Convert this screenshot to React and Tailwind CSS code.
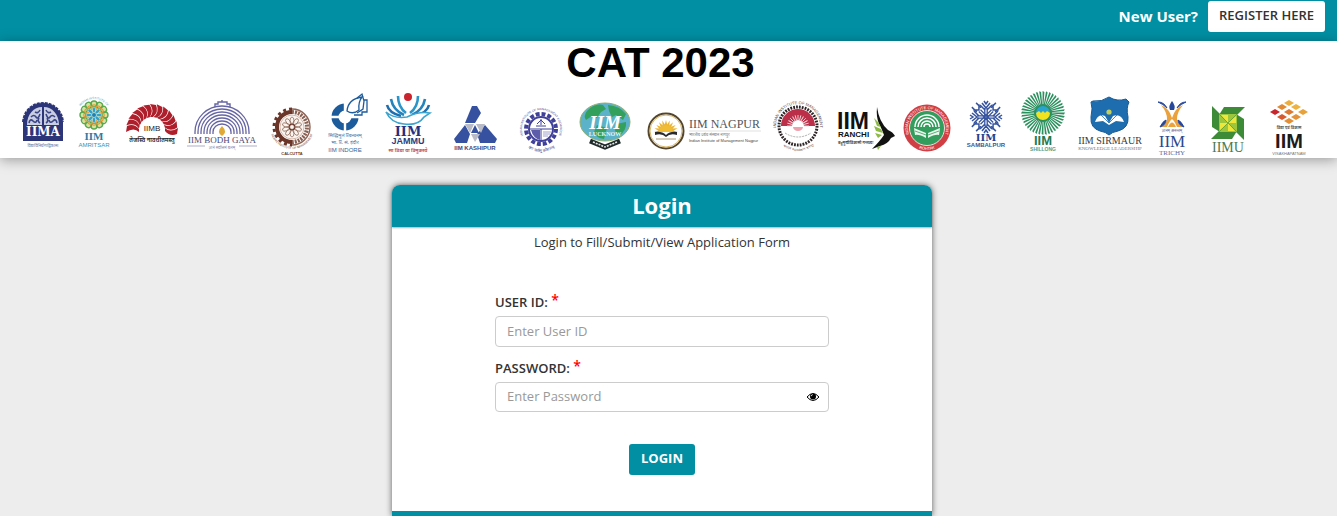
import { useState } from "react"

const SANS = "'Liberation Sans', sans-serif"
const SERIF = "'Liberation Serif', serif"
const SLAB = "'DejaVu Serif', serif"
const HINDI = "'Noto Sans', 'Noto Sans Devanagari', sans-serif"

// ================= HELPERS =================
function Logo({ width, name, children }) {
  return (
    <svg
      width={width}
      height={74}
      viewBox={`0 0 ${width} 74`}
      role="img"
      aria-label={name}
      className="shrink-0"
    >
      {children}
    </svg>
  )
}

function T({ x, y, size, font = SANS, weight = 400, fill, anchor = "middle", children }) {
  return (
    <text
      x={x}
      y={y}
      fontSize={size}
      fontFamily={font}
      fontWeight={weight}
      fill={fill}
      textAnchor={anchor}
    >
      {children}
    </text>
  )
}

// repeats one drawing around a centre
function Spin({ cx, cy, count, start = 0, step, children }) {
  const turn = step || 360 / count
  return Array.from({ length: count }, (_, i) => (
    <g key={i} transform={`translate(${cx} ${cy}) rotate(${start + i * turn})`}>
      {children}
    </g>
  ))
}

// text that runs round a seal, over the top or under the bottom
function RingText({ id, cx, cy, r, size, fill, bottom, children }) {
  const dx = r * 0.77
  const dy = bottom ? -r * 0.64 : r * 0.64
  return (
    <>
      <path
        id={id}
        fill="none"
        d={`M${cx - dx} ${cy + dy} A${r} ${r} 0 1 ${bottom ? 0 : 1} ${cx + dx} ${cy + dy}`}
      />
      <text fontSize={size} fontFamily={SANS} fill={fill} textAnchor="middle">
        <textPath href={`#${id}`} startOffset="50%">
          {children}
        </textPath>
      </text>
    </>
  )
}

// ================= LOGOS =================
function Ahmedabad() {
  return (
    <Logo width={57} name="IIM Ahmedabad">
      <path d="M9 57V38C10 26 19 19 29 19S48 26 49 38V57Z" fill="#2c3578" />
      <path
        d="M9 38C10 26 19 19 29 19S48 26 49 38"
        fill="none"
        stroke="#2c3578"
        strokeWidth="2"
        strokeDasharray="3 1"
      />
      <path d="M13 41C13 30 20 23 28 23V41ZM30 23C38 23 45 30 45 41H30Z" fill="#c9cee2" />
      <path
        d="M15 39q1-5 4-2t4-1M17 33q3-3 5 0t4-3M21 28q3 2 5-2M26 39q-3-2-1-5M43 39q-1-5-4-2t-4-1M41 33q-3-3-5 0t-4-3M37 28q-3 2-5-2M32 39q3-2 1-5"
        fill="none"
        stroke="#3b4585"
        strokeWidth="1.6"
      />
      <T x={29} y={52} size={12} font={SLAB} weight={700} fill="#fff">IIMA</T>
      <T x={29} y={63} size={4} font={HINDI} fill="#666b94">विद्याविनियोगाद्विकासः</T>
    </Logo>
  )
}

function Amritsar() {
  return (
    <Logo width={47} name="IIM Amritsar">
      <circle cx="23" cy="31" r="13" fill="#d9e29a" />
      <Spin cx={23} cy={31} count={12}>
        <circle cy="-11" r="3" fill="none" stroke="#5aa94c" strokeWidth="1.4" />
        <circle cy="-8" r="2.2" fill="none" stroke="#e79a3b" strokeWidth="1.2" />
      </Spin>
      <Spin cx={23} cy={31} count={8}>
        <ellipse cy="-5" rx="1.6" ry="3" fill="#2f9fce" stroke="#dff0d0" strokeWidth=".5" />
      </Spin>
      <circle cx="23" cy="31" r="2" fill="#1f7fb8" />
      <RingText id="asr" cx={23} cy={31} r={16} size={3} fill="#4b9cc4">INDIAN INSTITUTE OF</RingText>
      <T x={23} y={56} size={11} font={SERIF} weight={700} fill="#2f7ba3">IIM</T>
      <T x={23} y={63} size={6} fill="#2f94bd">AMRITSAR</T>
    </Logo>
  )
}

function Bangalore() {
  return (
    <Logo width={64} name="IIM Bangalore">
      <Spin cx={34} cy={46} count={13} start={-90} step={15}>
        <path d="M-2-13Q3-18-2-26L4-25Q7-18 1-13Z" fill="#ae1f2b" />
      </Spin>
      <T x={34} y={47} size={8} fill="#222">IIMB</T>
      <T x={34} y={58} size={6} font={HINDI} weight={600} fill="#222">तेजस्वि नावधीतमस्तु</T>
    </Logo>
  )
}

function BodhGaya() {
  return (
    <Logo width={82} name="IIM Bodh Gaya">
      {[27, 24, 21, 18, 15, 12, 9].map((r) => (
        <path
          key={r}
          d={`M${40 - r} 50V48A${r} ${r - 1} 0 0 1 ${40 + r} 48V50`}
          fill="none"
          stroke="#6665a3"
          strokeWidth="1.3"
        />
      ))}
      <path d="M33 23v-3h3v-2h9v2h3v3M40 18v-2" fill="none" stroke="#6665a3" strokeWidth="1.4" />
      <path d="M40 42q6 6 0 10q-6-4 0-10Z" fill="#e0a936" />
      <T x={40} y={59} size={9} font={SERIF} fill="#4c4a73">IIM BODH GAYA</T>
      <path d="M5 62h18M57 62h18" stroke="#8d8bb3" strokeWidth=".7" />
      <T x={40} y={65} size={4} font={HINDI} fill="#8583a8">ज्ञानं सर्वोत्तमं बलम्</T>
    </Logo>
  )
}

function Calcutta() {
  return (
    <Logo width={58} name="IIM Calcutta">
      <path d="M28 28A15 15 0 0 0 28 58" fill="none" stroke="#6a3428" strokeWidth="4" />
      <path
        d="M28 25A18 18 0 0 0 28 61"
        fill="none"
        stroke="#6a3428"
        strokeWidth="3"
        strokeDasharray="3 3"
      />
      <path d="M28 28A15 15 0 0 1 28 58" fill="none" stroke="#8a6153" strokeWidth="4" strokeDasharray="2 1" />
      <path d="M28 25A18 18 0 0 1 28 61" fill="none" stroke="#8a6153" strokeWidth="1.4" />
      <circle cx="28" cy="43" r="12" fill="#fbf4f0" stroke="#c9a898" strokeWidth=".8" />
      <Spin cx={28} cy={43} count={10}>
        <ellipse cy="-6" rx="2" ry="4" fill="none" stroke="#93705f" strokeWidth=".8" />
      </Spin>
      <circle cx="28" cy="43" r="3" fill="none" stroke="#6a3428" />
      <RingText id="cal" cx={28} cy={43} r={22} size={3} fill="#6a3428" bottom>
        INDIAN INSTITUTE OF MANAGEMENT
      </RingText>
      <T x={28} y={71} size={4} weight={700} fill="#6a3428">CALCUTTA</T>
    </Logo>
  )
}

function Indore() {
  return (
    <Logo width={55} name="IIM Indore">
      <circle cx="23" cy="33" r="10" fill="none" stroke="#1c5b9c" strokeWidth="7" />
      <path d="M23 19V48M8 33H38" stroke="#fff" strokeWidth="2.4" />
      <path d="M24 18H38V32H24Z" fill="#fff" />
      <path d="M25 27Q26 15 40 13Q36 18 37 26Q31 31 25 27Z" fill="#fff" stroke="#1c5b9c" strokeWidth="1.3" />
      <path d="M35 14L40 10L42 17L41 25L35 29M42 16H45V28H40V31H32" fill="none" stroke="#1c5b9c" strokeWidth="1.3" />
      <T x={23} y={53} size={5} font={HINDI} fill="#3c6f9f">सिद्धिमूलं प्रबन्धनम्</T>
      <T x={23} y={60} size={5} font={HINDI} fill="#3c6f9f">भा. प्र. सं. इंदौर</T>
      <T x={23} y={68} size={6} fill="#2f6598">IIM INDORE</T>
    </Logo>
  )
}

function Jammu() {
  return (
    <Logo width={65} name="IIM Jammu">
      <circle cx="31" cy="13" r="4" fill="#c9252f" />
      <g fill="none" strokeWidth="2.6">
        <path d="M10 21Q12 29 24 32" stroke="#1f6fae" />
        <path d="M14 15Q16 26 27 31" stroke="#2383bd" />
        <path d="M21 12Q21 23 29 29" stroke="#2b95c9" />
        <path d="M52 21Q50 29 38 32" stroke="#1f6fae" />
        <path d="M48 15Q46 26 35 31" stroke="#2383bd" />
        <path d="M41 12Q41 23 33 29" stroke="#2b95c9" />
      </g>
      <path
        d="M9 28Q17 35 30 33Q42 27 53 29Q50 31 47 33Q41 42 27 40Q14 39 9 28Z"
        fill="#fff"
        stroke="#3ba5cf"
        strokeWidth="1.6"
      />
      <T x={31} y={52} size={13} font={SLAB} weight={700} fill="#26307e">IIM</T>
      <T x={31} y={60} size={9} weight={700} fill="#2a3b80">JAMMU</T>
      <T x={31} y={68} size={5} font={HINDI} weight={600} fill="#b8434c">सा विद्या या विमुक्तये</T>
    </Logo>
  )
}

function Kashipur() {
  return (
    <Logo width={66} name="IIM Kashipur">
      <g fill="#3551a0">
        <path d="M30 22H35L39 29L33 39H23Z" />
        <path d="M23 41L28 50L25 59H14L12 55Z" />
        <path d="M43 41L55 55L53 59H38L35 50Z" />
        <path d="M33 41L37 49H29Z" />
      </g>
      <path d="M23 40H32L28 49ZM34 40H43L39 49ZM29 50H38L33 58Z" fill="#b9bcc6" />
      <T x={33} y={66} size={6} weight={700} fill="#3b477c">IIM KASHIPUR</T>
    </Logo>
  )
}

function Kozhikode() {
  return (
    <Logo width={62} name="IIM Kozhikode">
      <circle cx="33" cy="45" r="15" fill="none" stroke="#40409a" strokeWidth="4" strokeDasharray="3.9 2" />
      <circle cx="33" cy="45" r="12" fill="#fff" stroke="#40409a" strokeWidth="2" />
      <path d="M21 45H45M33 45V57M29 40l4-4 4 4M33 35v6M28 42h10" fill="none" stroke="#40409a" />
      <path d="M23 46H32V56Q25 54 23 46Z" fill="#5c5cab" />
      <path d="M35 48h8M35 50h7M35 52h5" stroke="#8b8bc2" strokeWidth=".8" />
      <RingText id="koz" cx={33} cy={45} r={19} size={3} fill="#40408c">
        INDIAN INSTITUTE OF MANAGEMENT KOZHIKODE
      </RingText>
      <RingText id="koz2" cx={33} cy={45} r={23} size={4} fill="#40408c" bottom>
        योगः कर्मसु कौशलम्
      </RingText>
    </Logo>
  )
}

function Lucknow() {
  return (
    <Logo width={70} name="IIM Lucknow">
      <ellipse cx="35" cy="38" rx="25" ry="19" fill="#5cb3c9" stroke="#8fae6c" strokeWidth="1" />
      <path
        d="M17 27Q25 19 33 21L36 25L31 28L27 34L22 32L16 36Q13 32 17 27ZM38 21Q50 22 56 30L53 36L46 31L42 33L39 27ZM27 41L37 44L34 55Q26 54 24 48ZM46 40L56 38Q57 46 49 52L45 47Z"
        fill="#33a05c"
      />
      <text x="35" y="45" fontSize="19" fontFamily={SERIF} fontWeight="700" fontStyle="italic" fill="#fff" textAnchor="middle">
        IIM
      </text>
      <T x={35} y={52} size={6} font={SERIF} weight={700} fill="#e8f6f2">LUCKNOW</T>
      <path d="M20 57L35 63L50 57" fill="none" stroke="#1f2a2a" strokeWidth="5" />
      <path d="M23 58L35 63L47 58" fill="none" stroke="#e6e6e6" strokeWidth="1.6" strokeDasharray="2 1" />
    </Logo>
  )
}

function Nagpur() {
  return (
    <Logo width={127} name="IIM Nagpur">
      <circle cx="26" cy="47" r="17.5" fill="#fff" stroke="#54462e" strokeWidth="2" />
      <circle cx="26" cy="47" r="16" fill="none" stroke="#d8b768" strokeWidth="1" />
      <Spin cx={26} cy={48} count={11} start={-90} step={18}>
        <path d="M-1.6-6L0-12L1.6-6Z" fill="#ecb42f" />
      </Spin>
      <path d="M19 48A7 7 0 0 1 33 48Z" fill="#f0bb35" />
      <path d="M15 48Q22 47 26 51Q30 47 37 48V51Q30 49 26 53Q22 49 15 51Z" fill="#2b2b2b" />
      <path d="M16 55H36" stroke="#a89a72" />
      <T x={49} y={44} size={12} font={SERIF} fill="#555" anchor="start">IIM NAGPUR</T>
      <path d="M49 47H121" stroke="#ccc" strokeWidth=".6" />
      <T x={49} y={52} size={4} font={HINDI} fill="#777" anchor="start">भारतीय प्रबंध संस्थान नागपुर</T>
      <T x={49} y={58} size={4} fill="#444" anchor="start">Indian Institute of Management Nagpur</T>
    </Logo>
  )
}

function Raipur() {
  return (
    <Logo width={64} name="IIM Raipur">
      <circle cx="31" cy="42" r="19" fill="#fff" stroke="#2d2427" strokeWidth="3" strokeDasharray="1.8 1.1" />
      <path d="M14 42A17 17 0 0 1 48 42Z" fill="#bb2f48" />
      <Spin cx={31} cy={42} count={13} start={-90} step={15}>
        <path d="M0-6V-11" stroke="#f7d9de" strokeWidth=".9" />
      </Spin>
      <path d="M25 42A6 6 0 0 1 37 42Z" fill="#fff" />
      <path d="M26 43A5 4 0 0 0 36 43Z" fill="#eba2ae" />
      <path d="M18 49Q31 57 44 49" fill="none" stroke="#999" strokeWidth=".8" strokeDasharray="2 1" />
      <RingText id="rai" cx={31} cy={42} r={22} size={4} fill="#5b4a4e">
        INDIAN INSTITUTE OF MANAGEMENT
      </RingText>
      <RingText id="rai2" cx={31} cy={42} r={25} size={3} fill="#5b4a4e" bottom>
        भारतीय प्रबंध संस्थान रायपुर
      </RingText>
    </Logo>
  )
}

function Ranchi() {
  return (
    <Logo width={68} name="IIM Ranchi">
      <T x={6} y={45} size={23} weight={700} fill="#111" anchor="start">IIM</T>
      <T x={7} y={53} size={8} weight={700} fill="#111" anchor="start">RANCHI</T>
      <T x={7} y={60} size={4} font={HINDI} weight={600} fill="#333" anchor="start">बहुमुखीविकासो गन्तव्यः</T>
      <path d="M46 23Q48 38 57 46Q62 48 64 52L60 54Q57 60 49 62L41 65Q49 57 53 51Q51 45 48 40Q45 33 46 23Z" fill="#121212" />
      <path d="M43 34L47 38L50 43L46 42ZM43 42L50 45L52 49L45 47ZM44 49L51 51L47 54Z" fill="#8dbb45" />
      <path d="M46 63L50 62L47 66Z" fill="#8dbb45" />
    </Logo>
  )
}

function Rohtak() {
  return (
    <Logo width={60} name="IIM Rohtak">
      <circle cx="28" cy="44" r="23.5" fill="#d13f45" />
      <circle cx="28" cy="44" r="17.5" fill="#329d5c" stroke="#f3dcdc" strokeWidth="1" />
      {[12, 9, 6, 3].map((r) => (
        <path
          key={r}
          d={`M${28 - r} 43A${r} ${r} 0 0 1 ${28 + r} 43`}
          fill="none"
          stroke="#fff"
          strokeWidth="1.5"
        />
      ))}
      <path d="M15 44L27 49V54Q20 50 16 51ZM41 44L29 49V54Q36 50 40 51Z" fill="#e8f6ec" />
      <path d="M16 47l11 4M40 47l-11 4" stroke="#329d5c" strokeWidth=".8" />
      <RingText id="roh" cx={28} cy={44} r={19} size={4} fill="#fff">
        INDIAN INSTITUTE OF MANAGEMENT
      </RingText>
      <RingText id="roh2" cx={28} cy={44} r={22} size={4} fill="#fff" bottom>
        ROHTAK
      </RingText>
    </Logo>
  )
}

function Sambalpur() {
  return (
    <Logo width={54} name="IIM Sambalpur">
      <Spin cx={27} cy={33} count={8}>
        <path d="M-1.2 0V-9M1.2 0V-9" stroke="#35539f" strokeWidth="1.3" />
      </Spin>
      <Spin cx={27} cy={33} count={4}>
        <path d="M-4-14L0-9L4-14M-2-16L0-13L2-16M-6-12L-1-7M6-12L1-7" fill="none" stroke="#35539f" strokeWidth="1.5" />
      </Spin>
      <Spin cx={27} cy={33} count={4} start={45}>
        <path d="M-4-14L0-10L4-14M-3-10V-17M3-10V-17" fill="none" stroke="#35539f" strokeWidth="1.5" />
      </Spin>
      <T x={27} y={57} size={10} font={SLAB} weight={700} fill="#26408f">IIM</T>
      <T x={27} y={63} size={6} weight={700} fill="#41558f">SAMBALPUR</T>
    </Logo>
  )
}

function Shillong() {
  return (
    <Logo width={59} name="IIM Shillong">
      <Spin cx={30} cy={29} count={40}>
        <path d="M-.5-8L-.4-22L1.4-21L.5-8Z" fill="#2b8f5e" />
      </Spin>
      <circle cx="30" cy="29" r="9" fill="#2b8f5e" />
      <path d="M23 29A7 7 0 0 1 37 29Z" fill="#2aa3cf" />
      <path d="M23 29L26 27L28 29L30 27L32 29L34 27L37 29A7 7 0 0 1 23 29Z" fill="#f2e31f" />
      <T x={30} y={61} size={13} weight={700} fill="#1f7a50">IIM</T>
      <T x={30} y={67} size={5} weight={700} fill="#5a9c80">SHILLONG</T>
    </Logo>
  )
}

function Sirmaur() {
  return (
    <Logo width={78} name="IIM Sirmaur">
      <path
        d="M21 17Q30 18 37 13Q45 18 54 15L57 18Q54 24 56 33Q57 44 46 47Q40 48 37 51Q34 48 28 47Q18 44 19 33Q21 24 19 18Z"
        fill="#1e6daf"
        stroke="#195a94"
      />
      <path d="M23 38Q26 29 33 32L37 39L41 32Q49 29 52 38L44 37L37 41L31 37Z" fill="#fff" />
      <path d="M29 31L37 39M45 31L37 39" stroke="#1e6daf" strokeWidth=".8" />
      <circle cx="37" cy="28" r="2.6" fill="#c3cf5b" />
      <T x={38} y={60} size={10} font={SERIF} fill="#3a3a3a">IIM SIRMAUR</T>
      <T x={38} y={66} size={5} font={SERIF} fill="#777">KNOWLEDGE LEADERSHIP</T>
    </Logo>
  )
}

function Trichy() {
  return (
    <Logo width={48} name="IIM Trichy">
      <path d="M22 17Q26 22 24 26H20Q18 22 22 17Z" fill="#27479b" />
      <path d="M11 21Q19 24 22 34Q25 24 33 21Q27 28 27 35Q28 41 33 43H27Q24 36 22 35Q20 36 17 43H11Q16 41 17 35Q17 28 11 21Z" fill="#eba23c" />
      <path d="M18 43Q22 34 26 43Z" fill="#eba23c" />
      <path d="M8 18Q14 18 17 24Q13 20 8 18ZM36 18Q30 18 27 24Q31 20 36 18Z" fill="#27479b" stroke="#27479b" />
      <path d="M10 43Q13 37 16 36Q16 41 10 43ZM34 43Q31 37 28 36Q28 41 34 43Z" fill="#27479b" stroke="#27479b" />
      <T x={22} y={48} size={4} font={HINDI} fill="#4b5e96">ज्ञानम् अनन्तम्</T>
      <T x={22} y={63} size={17} font={SERIF} fill="#2b4a8d">IIM</T>
      <T x={22} y={71} size={7} font={SERIF} fill="#5a6ea4">TRICHY</T>
    </Logo>
  )
}

function Udaipur() {
  return (
    <Logo width={60} name="IIM Udaipur">
      <Spin cx={30} cy={39} count={4}>
        <path d="M-4-16H17L9-8H-9Z" fill="#3d8b37" />
      </Spin>
      <path d="M21 30H39V48H21Z" fill="#9cc63c" />
      <Spin cx={30} cy={39} count={4}>
        <path d="M0 0L-7-8H0Z" fill="#efe63a" />
      </Spin>
      <path d="M21 30L39 48M39 30L21 48" stroke="#5e9f35" strokeWidth=".8" />
      <T x={30} y={68} size={14} font={SERIF} fill="#4c7a4f">IIMU</T>
    </Logo>
  )
}

const TILES = [
  [31, 19, "#ecae3e"],
  [24, 23, "#e08a34"],
  [38, 23, "#edb23f"],
  [17, 28, "#c8262d"],
  [31, 28, "#dd7a31"],
  [45, 28, "#e7a33b"],
  [24, 33, "#d65a2e"],
  [38, 33, "#e39237"],
  [31, 37, "#e28f36"],
]

function Visakhapatnam() {
  return (
    <Logo width={65} name="IIM Visakhapatnam">
      {TILES.map(([x, y, color]) => (
        <path key={`${x}-${y}`} d={`M${x - 5} ${y}L${x} ${y - 3}L${x + 5} ${y}L${x} ${y + 3}Z`} fill={color} />
      ))}
      <T x={31} y={45} size={4} font={HINDI} weight={600} fill="#444">विद्या एवं विकास</T>
      <T x={31} y={64} size={20} weight={700} fill="#1c1c1c">IIM</T>
      <T x={31} y={71} size={4} fill="#777">VISAKHAPATNAM</T>
    </Logo>
  )
}

// ================= FORM =================
function FieldLabel({ htmlFor, children }) {
  return (
    <label htmlFor={htmlFor} className="block text-[13px] leading-5 font-semibold text-[#333]">
      {children} <span className="align-top leading-4 text-sm text-[#f00]">*</span>
    </label>
  )
}

export default function App() {
  const [userId, setUserId] = useState("")
  const [password, setPassword] = useState("")
  const [showPassword, setShowPassword] = useState(false)

  return (
    <div className="min-h-screen flex flex-col bg-[#ededed] text-[#333] font-['Open_Sans',sans-serif]">
      {/* TOP BAR */}
      <div className="h-[41px] shrink-0 flex items-start justify-end gap-[10px] pt-px pr-3 bg-[#008fa3]">
        <span className="text-[15px] leading-[31px] font-bold text-white">New User?</span>
        <button className="h-[31px] px-[11px] pb-px rounded-[3px] bg-white text-[13px] font-semibold text-[#333]">
          REGISTER HERE
        </button>
      </div>

      {/* BANNER */}
      <header className="bg-white shadow-[0_2px_12px_rgba(0,0,0,0.35)]">
        <h1 className="pr-4 text-center text-[42px] leading-[43px] font-bold text-black font-['Liberation_Sans',sans-serif]">
          CAT 2023
        </h1>
        <div className="flex justify-between px-[14px]">
          <Ahmedabad />
          <Amritsar />
          <Bangalore />
          <BodhGaya />
          <Calcutta />
          <Indore />
          <Jammu />
          <Kashipur />
          <Kozhikode />
          <Lucknow />
          <Nagpur />
          <Raipur />
          <Ranchi />
          <Rohtak />
          <Sambalpur />
          <Shillong />
          <Sirmaur />
          <Trichy />
          <Udaipur />
          <Visakhapatnam />
        </div>
      </header>

      {/* LOGIN CARD */}
      <main className="flex-1 flex justify-center pt-[27px] pr-[13px]">
        <div className="w-full max-w-[540px] flex flex-col rounded-t-lg bg-white shadow-[0_0_6px_rgba(0,0,0,0.6)]">
          <h2 className="h-[42px] rounded-t-lg bg-[#008fa3] text-center text-[22px] leading-[41px] font-bold text-white shadow-[0_1px_2px_rgba(0,0,0,0.3)]">
            Login
          </h2>
          <p className="pt-[5px] text-center text-[13px] leading-5">
            Login to Fill/Submit/View Application Form
          </p>

          <form
            className="flex flex-col px-[103px] pt-10 pb-9"
            onSubmit={(e) => e.preventDefault()}
          >
            <FieldLabel htmlFor="userId">USER ID:</FieldLabel>
            <input
              id="userId"
              type="text"
              value={userId}
              onChange={(e) => setUserId(e.target.value)}
              placeholder="Enter User ID"
              className="mt-1 h-[31px] w-full rounded border border-[#ccc] px-[11px] pb-px text-[13px] placeholder:text-[#999] outline-none"
            />

            <div className="mt-[11px]">
              <FieldLabel htmlFor="password">PASSWORD:</FieldLabel>
            </div>
            <div className="mt-1 h-[30px] flex items-center rounded border border-[#ccc] pr-2">
              <input
                id="password"
                type={showPassword ? "text" : "password"}
                value={password}
                onChange={(e) => setPassword(e.target.value)}
                placeholder="Enter Password"
                className="flex-1 min-w-0 px-[11px] text-[13px] placeholder:text-[#999] outline-none"
              />
              <button
                type="button"
                aria-label="Show password"
                onClick={() => setShowPassword(!showPassword)}
                className="text-black"
              >
                <svg width="14" height="12" viewBox="0 0 14 12">
                  <path d="M1 6Q7-1 13 6Q7 13 1 6Z" fill="#fff" stroke="#000" />
                  <circle cx="7" cy="5.5" r="3" />
                  <path d="M5.2 5.2Q5.4 3.8 6.8 3.6" fill="none" stroke="#fff" strokeWidth=".8" />
                </svg>
              </button>
            </div>

            <button
              type="submit"
              className="mt-8 h-[31px] self-center px-3 pb-px rounded-[3px] bg-[#008fa3] text-[13px] font-bold text-white"
            >
              LOGIN
            </button>
          </form>

          <div className="mt-auto h-[5px] bg-[#008fa3]" />
        </div>
      </main>
    </div>
  )
}
